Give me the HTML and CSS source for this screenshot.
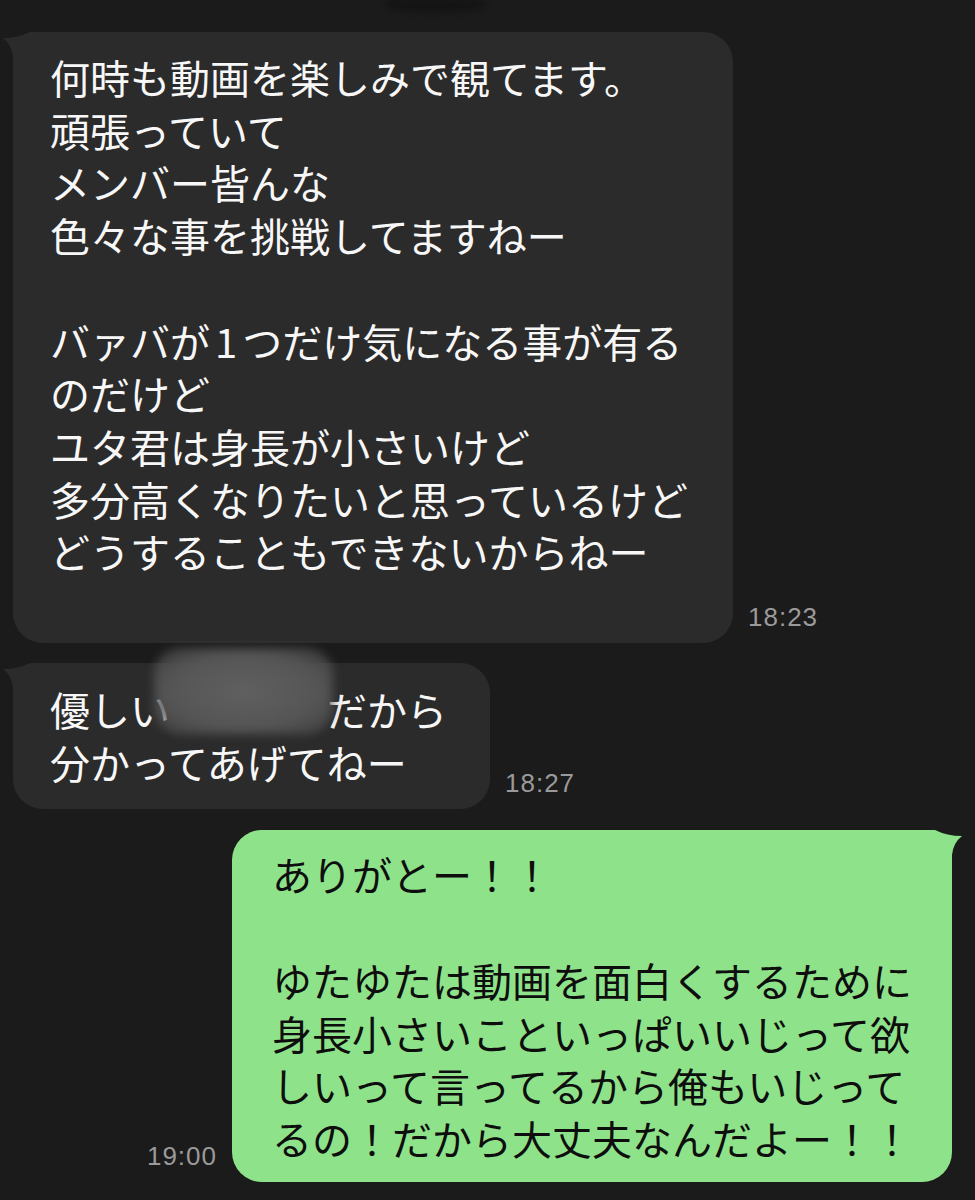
FILE: index.html
```html
<!DOCTYPE html>
<html lang="ja">
<head>
    <meta charset="UTF-8">
    <meta name="viewport" content="width=device-width, initial-scale=1.0">
    <title>トーク</title>
    <link rel="stylesheet" href="styles.css">
</head>
<body>
    <div class="chat">
        <div class="chat-top">
            <div class="top-shade"></div>
        </div>

        <div class="row row-left">
            <div class="bubble bubble-gray bubble-first">
                <svg class="tail tail-left" viewBox="0 0 42 38" width="42" height="38">
                    <path d="M0 6 Q15 6 27 0 L42 0 L42 38 L10 38 L10 25 Q9 13 0 6 Z"></path>
                </svg>
                <p>何時も動画を楽しみで観てます。<br>頑張っていて<br>メンバー皆んな<br>色々な事を挑戦してますねー<br><br>バァバが<span class="num">1</span>つだけ気になる事が有る<br>のだけど<br>ユタ君は身長が小さいけど<br>多分高くなりたいと思っているけど<br>どうすることもできないからねー</p>
            </div>
            <span class="time">18:23</span>
        </div>

        <div class="row row-left">
            <div class="bubble bubble-gray bubble-short">
                <svg class="tail tail-left" viewBox="0 0 42 38" width="42" height="38">
                    <path d="M0 6 Q15 6 27 0 L42 0 L42 38 L10 38 L10 25 Q9 13 0 6 Z"></path>
                </svg>
                <p>優しい<span class="hidden-name"></span>だから<br>分かってあげてねー</p>
            </div>
            <span class="time">18:27</span>
        </div>

        <div class="row row-right">
            <span class="time">19:00</span>
            <div class="bubble bubble-green">
                <svg class="tail tail-right" viewBox="0 0 42 38" width="42" height="38">
                    <path d="M0 6 Q15 6 27 0 L42 0 L42 38 L10 38 L10 25 Q9 13 0 6 Z"></path>
                </svg>
                <p>ありがとー！！<br><br>ゆたゆたは動画を面白くするために<br>身長小さいこといっぱいいじって欲<br>しいって言ってるから俺もいじって<br>るの！だから大丈夫なんだよー！！</p>
            </div>
        </div>
    </div>
</body>
</html>
```

FILE: styles.css
```css
body {
    margin: 0;
    background-color: #1b1b1b;
    font-family: "Noto Sans CJK JP", sans-serif;
    overflow: hidden;
}

.chat {
    display: flex;
    flex-direction: column;
    gap: 20px;
    height: 1200px;
}

.chat-top {
    height: 12px;
}

.top-shade {
    width: 100px;
    height: 12px;
    margin-left: 385px;
    background-color: #141414;
    border-radius: 0 0 50% 50%;
    filter: blur(3px);
}

.row {
    display: flex;
    align-items: flex-end;
}

.row-left {
    padding-left: 13px;
}

.row-right {
    justify-content: flex-end;
    padding-right: 23px;
    margin-top: 1px;
}

.bubble {
    position: relative;
    border-radius: 30px;
    box-sizing: border-box;
}

.bubble p {
    position: relative;
    margin: 0;
    font-size: 40px;
    line-height: 52.7px;
    white-space: nowrap;
}

.num {
    padding: 0 5px;
}

.bubble-gray {
    background-color: #2b2b2b;
    color: #f7f7f7;
}

.bubble-gray .tail path {
    fill: #2b2b2b;
}

.bubble-first {
    width: 720px;
    padding: 19px 40px 65px 37px;
}

.bubble-short {
    padding: 20px 43px 21px 37px;
}

.bubble-green {
    width: 720px;
    padding: 18px 40px 17px 40px;
    background-color: #8ee38a;
    color: #0e0e0e;
}

.bubble-green .tail path {
    fill: #8ee38a;
}

.tail {
    position: absolute;
    top: 0;
}

.tail-left {
    left: -10px;
}

.tail-right {
    right: -10px;
    transform: scaleX(-1);
}

.hidden-name {
    position: relative;
    display: inline-block;
    width: 157px;
    height: 1em;
}

.hidden-name::before {
    content: "";
    position: absolute;
    left: -16px;
    right: -6px;
    top: -38px;
    bottom: -8px;
    background:
        repeating-linear-gradient(0deg, rgba(150, 150, 150, 0.25) 0 2px, rgba(80, 80, 80, 0.2) 2px 4px),
        radial-gradient(ellipse at center, #595959 0%, #4b4b4b 60%, rgba(60, 60, 60, 0) 100%);
    border-radius: 26px;
    filter: blur(5px);
}

.time {
    margin: 0 15px 13px;
    font-family: "Liberation Sans", Arial, sans-serif;
    font-size: 26px;
    line-height: 26px;
    letter-spacing: 1px;
    color: #9a9a9a;
}
```
